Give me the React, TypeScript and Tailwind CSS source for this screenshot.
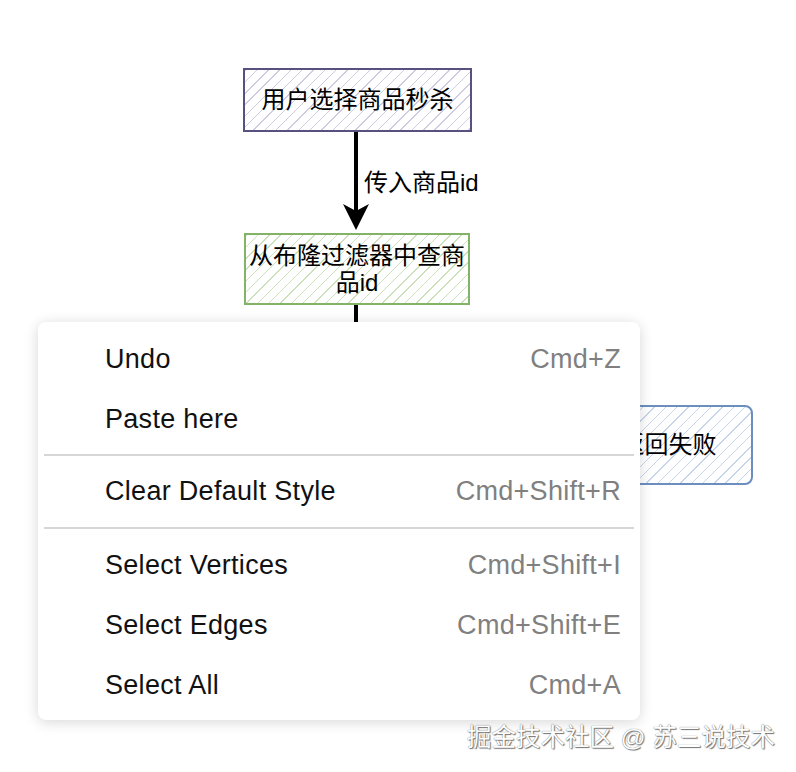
import React from "react";

const cjk = { fontFamily: '"Liberation Sans", "Noto Sans CJK SC", sans-serif' };
const ui = { fontFamily: '"Liberation Sans", Arial, sans-serif' };

type Item = { label: string; key: string } | { sep: number };

const items: Item[] = [
  { label: "Undo", key: "Cmd+Z" },
  { label: "Paste here", key: "" },
  { sep: 12 },
  { label: "Clear Default Style", key: "Cmd+Shift+R" },
  { sep: 14 },
  { label: "Select Vertices", key: "Cmd+Shift+I" },
  { label: "Select Edges", key: "Cmd+Shift+E" },
  { label: "Select All", key: "Cmd+A" },
];

export default function App() {
  return (
    <div className="relative w-[796px] h-[772px] bg-white overflow-hidden">
      {/* diagram nodes */}
      <div
        className="absolute left-[243px] top-[68px] w-[229px] h-[64px] border-2 border-[#56517e] bg-[repeating-linear-gradient(135deg,#cfcce2_0px,#cfcce2_1px,transparent_1px,transparent_8px)] flex items-center justify-center text-[24px] text-black"
        style={cjk}
      >
        用户选择商品秒杀
      </div>

      <div
        className="absolute left-[364px] top-[168px] text-[24px] leading-[30px] text-black"
        style={cjk}
      >
        传入商品id
      </div>

      <div
        className="absolute left-[244px] top-[233px] w-[226px] h-[72px] border-2 border-[#82b366] bg-[repeating-linear-gradient(135deg,#cbe0bb_0px,#cbe0bb_1px,transparent_1px,transparent_8px)] flex items-center justify-center text-center text-[24px] leading-[27px] text-black"
        style={cjk}
      >
        从布隆过滤器中查商
        <br />
        品id
      </div>

      <div
        className="absolute left-[584px] top-[405px] w-[169px] h-[80px] rounded-[8px] border-2 border-[#6c8ebf] bg-[repeating-linear-gradient(135deg,#c6d5ea_0px,#c6d5ea_1px,transparent_1px,transparent_8px)] flex items-center justify-center text-[24px] text-black"
        style={cjk}
      >
        返回失败
      </div>

      <svg className="absolute left-0 top-0" width="796" height="772">
        <line x1="356" y1="132" x2="356" y2="214" stroke="#000" strokeWidth="4" />
        <polygon points="356,230 343,204 356,211 369,204" fill="#000" />
        <line x1="356" y1="305" x2="356" y2="330" stroke="#000" strokeWidth="4" />
      </svg>

      {/* context menu */}
      <div
        className="absolute left-[38px] top-[322px] w-[602px] h-[398px] bg-white rounded-[8px] shadow-[0_2px_14px_rgba(0,0,0,0.16)] pt-[7px] flex flex-col"
        style={ui}
      >
        {items.map((it, i) =>
          "sep" in it ? (
            <div
              key={i}
              className={`${it.sep === 12 ? "h-[12px]" : "h-[14px]"} flex items-center px-[6px]`}
            >
              <div className="h-[2px] w-full bg-[#d6d6d6]" />
            </div>
          ) : (
            <div
              key={i}
              className="h-[60px] flex items-center justify-between pl-[67px] pr-[19px] text-[27px] tracking-[0.3px]"
            >
              <span className="text-[#111]">{it.label}</span>
              <span className="text-[#808080]">{it.key}</span>
            </div>
          )
        )}
      </div>

      <div
        className="absolute left-[467px] top-[722px] text-[24.5px] leading-[32px] text-white [text-shadow:0_0_1px_#555,1px_1px_1px_#777]"
        style={cjk}
      >
        掘金技术社区 @ 苏三说技术
      </div>
    </div>
  );
}
